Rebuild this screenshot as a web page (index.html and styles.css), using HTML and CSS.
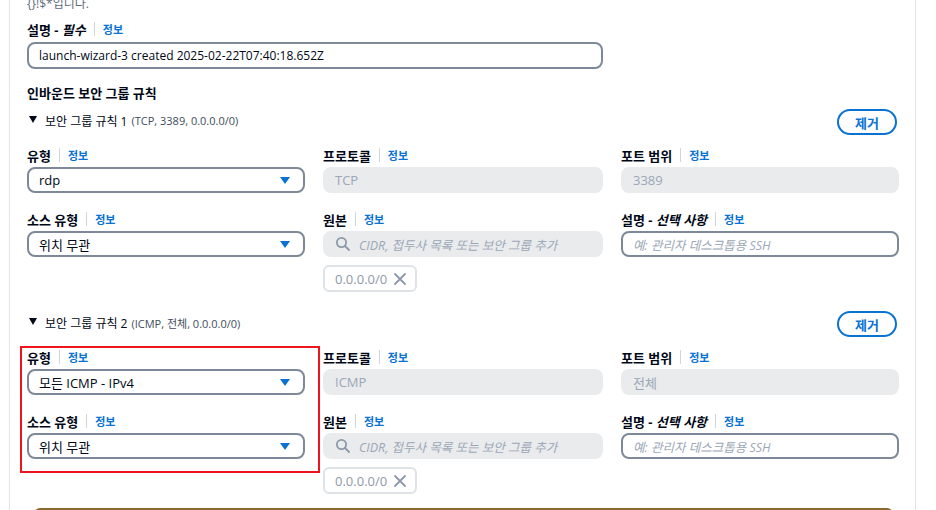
FILE: index.html
```html
<!DOCTYPE html>
<html lang="ko">
<head>
    <meta charset="UTF-8">
    <meta name="viewport" content="width=device-width, initial-scale=1.0">
    <title>보안 그룹 규칙</title>
    <link rel="stylesheet" href="styles.css">
</head>
<body>
    <div class="panel">
        <p class="hint">{}!$*입니다.</p>

        <div class="label"><span>설명 - <i>필수</i></span><span class="sep"></span><a class="info">정보</a></div>
        <div class="input wide">launch-wizard-3 created 2025-02-22T07:40:18.652Z</div>

        <h2 class="section-title">인바운드 보안 그룹 규칙</h2>

        <!-- rule 1 -->
        <div class="rule">
            <div class="rule-head">
                <span class="caret-down"></span>
                <span class="rule-name">보안 그룹 규칙 1</span>
                <span class="rule-meta">(TCP, 3389, 0.0.0.0/0)</span>
                <button class="remove-btn">제거</button>
            </div>
            <div class="rule-grid">
                <div class="field">
                    <div class="label"><span>유형</span><span class="sep"></span><a class="info">정보</a></div>
                    <div class="input select">rdp<span class="arrow"></span></div>
                </div>
                <div class="field">
                    <div class="label"><span>프로토콜</span><span class="sep"></span><a class="info">정보</a></div>
                    <div class="input disabled">TCP</div>
                </div>
                <div class="field">
                    <div class="label"><span>포트 범위</span><span class="sep"></span><a class="info">정보</a></div>
                    <div class="input disabled">3389</div>
                </div>
                <div class="field">
                    <div class="label"><span>소스 유형</span><span class="sep"></span><a class="info">정보</a></div>
                    <div class="input select">위치 무관<span class="arrow"></span></div>
                </div>
                <div class="field">
                    <div class="label"><span>원본</span><span class="sep"></span><a class="info">정보</a></div>
                    <div class="input disabled search">
                        <svg class="search-icon" width="16" height="16" viewBox="0 0 16 16"><circle cx="6.5" cy="6.5" r="4.6" fill="none" stroke="#8d99a8" stroke-width="1.8"/><path d="M10 10l4 4" stroke="#8d99a8" stroke-width="1.8" stroke-linecap="round"/></svg>
                        <span class="placeholder">CIDR, 접두사 목록 또는 보안 그룹 추가</span>
                    </div>
                    <div class="token">0.0.0.0/0
                        <svg width="14" height="14" viewBox="0 0 14 14"><path d="M2 2l10 10M12 2L2 12" stroke="#8d99a8" stroke-width="1.8" stroke-linecap="round"/></svg>
                    </div>
                </div>
                <div class="field">
                    <div class="label"><span>설명 - <i>선택 사항</i></span><span class="sep"></span><a class="info">정보</a></div>
                    <div class="input"><span class="placeholder">예: 관리자 데스크톱용 SSH</span></div>
                </div>
            </div>
        </div>

        <!-- rule 2 -->
        <div class="rule">
            <div class="rule-head">
                <span class="caret-down"></span>
                <span class="rule-name">보안 그룹 규칙 2</span>
                <span class="rule-meta">(ICMP, 전체, 0.0.0.0/0)</span>
                <button class="remove-btn">제거</button>
            </div>
            <div class="rule-grid marked">
                <div class="field">
                    <div class="label"><span>유형</span><span class="sep"></span><a class="info">정보</a></div>
                    <div class="input select">모든 ICMP - IPv4<span class="arrow"></span></div>
                </div>
                <div class="field">
                    <div class="label"><span>프로토콜</span><span class="sep"></span><a class="info">정보</a></div>
                    <div class="input disabled">ICMP</div>
                </div>
                <div class="field">
                    <div class="label"><span>포트 범위</span><span class="sep"></span><a class="info">정보</a></div>
                    <div class="input disabled">전체</div>
                </div>
                <div class="field">
                    <div class="label"><span>소스 유형</span><span class="sep"></span><a class="info">정보</a></div>
                    <div class="input select">위치 무관<span class="arrow"></span></div>
                </div>
                <div class="field">
                    <div class="label"><span>원본</span><span class="sep"></span><a class="info">정보</a></div>
                    <div class="input disabled search">
                        <svg class="search-icon" width="16" height="16" viewBox="0 0 16 16"><circle cx="6.5" cy="6.5" r="4.6" fill="none" stroke="#8d99a8" stroke-width="1.8"/><path d="M10 10l4 4" stroke="#8d99a8" stroke-width="1.8" stroke-linecap="round"/></svg>
                        <span class="placeholder">CIDR, 접두사 목록 또는 보안 그룹 추가</span>
                    </div>
                    <div class="token">0.0.0.0/0
                        <svg width="14" height="14" viewBox="0 0 14 14"><path d="M2 2l10 10M12 2L2 12" stroke="#8d99a8" stroke-width="1.8" stroke-linecap="round"/></svg>
                    </div>
                </div>
                <div class="field">
                    <div class="label"><span>설명 - <i>선택 사항</i></span><span class="sep"></span><a class="info">정보</a></div>
                    <div class="input"><span class="placeholder">예: 관리자 데스크톱용 SSH</span></div>
                </div>
            </div>
        </div>

        <div class="next-bar"></div>
    </div>
</body>
</html>
```

FILE: styles.css
```css
body {
    margin: 0;
    font-family: "Open Sans", "Noto Sans CJK KR", sans-serif;
    font-size: 13px;
    color: #000716;
    background-color: #fff;
    overflow: hidden;
}

.panel {
    margin: -4px 20px 0 9px;
    padding: 0 17px;
    border-left: 1px solid #e3e5e8;
    border-right: 1px solid #e3e5e8;
    height: 514px;
    overflow: hidden;
}

.hint {
    margin: 0;
    line-height: 16px;
    font-size: 12px;
    color: #5f6b7a;
}

.label {
    display: flex;
    align-items: center;
    height: 20px;
    font-weight: 700;
    font-size: 13px;
    margin-bottom: 2px;
}

.label i {
    font-style: italic;
}

.sep {
    width: 1px;
    height: 14px;
    background-color: #d1d5db;
    margin: 0 8px;
}

.info {
    color: #0972d3;
    font-size: 11px;
    font-weight: 700;
}

.panel > .label {
    margin-top: 7px;
    margin-bottom: 3px;
}

.input {
    box-sizing: border-box;
    height: 26px;
    border: 2px solid #7d8998;
    border-radius: 8px;
    padding: 0 10px;
    display: flex;
    align-items: center;
    font-size: 13px;
    color: #000716;
    white-space: nowrap;
    overflow: hidden;
}

.input.wide {
    width: 576px;
    height: 27px;
    font-size: 12px;
}

.input.select {
    justify-content: space-between;
}

.arrow {
    width: 0;
    height: 0;
    border-left: 5px solid transparent;
    border-right: 5px solid transparent;
    border-top: 7px solid #0972d3;
    margin-right: 3px;
}

.input.disabled {
    border-color: #e9ebed;
    background-color: #e9ebed;
    color: #9ba7b6;
}

.search-icon {
    margin-right: 8px;
    flex-shrink: 0;
}

.placeholder {
    font-style: italic;
    color: #9ba7b6;
    font-size: 12.5px;
}

.section-title {
    margin: 14px 0 0;
    font-size: 13px;
    font-weight: 700;
    line-height: 20px;
}

.rule-head {
    display: flex;
    align-items: center;
    height: 26px;
    margin-top: 6px;
}

.caret-down {
    width: 0;
    height: 0;
    border-left: 4px solid transparent;
    border-right: 4px solid transparent;
    border-top: 7px solid #000716;
    margin: 0 8px 5px 2px;
}

.rule-name {
    font-size: 12px;
    color: #000716;
    margin-bottom: 3px;
}

.rule-meta {
    margin-left: 4px;
    margin-bottom: 3px;
    font-size: 11px;
    color: #414d5c;
}

.remove-btn {
    margin-left: auto;
    margin-right: 1px;
    height: 26px;
    width: 60px;
    border: 2px solid #0972d3;
    border-radius: 14px;
    background-color: #fff;
    color: #0972d3;
    font-family: inherit;
    font-size: 13px;
    font-weight: 700;
    cursor: pointer;
}

.rule-grid {
    position: relative;
    display: grid;
    grid-template-columns: 278px 280px 278px;
    column-gap: 18px;
    row-gap: 16px;
    margin-top: 10px;
}

.field {
    display: flex;
    flex-direction: column;
}

.rule + .rule {
    margin-top: 19px;
}

.marked::before {
    content: "";
    position: absolute;
    left: -7px;
    top: -1px;
    width: 296px;
    height: 123px;
    border: 2px solid #f0141e;
}

.token {
    box-sizing: border-box;
    align-self: flex-start;
    display: flex;
    align-items: center;
    gap: 6px;
    height: 27px;
    margin-top: 8px;
    padding: 0 8px 0 10px;
    border: 2px solid #dfe2e6;
    border-radius: 6px;
    color: #8d99a8;
    font-size: 13px;
}

.next-bar {
    margin: 14px 5px 0 7px;
    height: 20px;
    border-top: 2px solid #8a6a2e;
    border-radius: 6px 6px 0 0;
}
```
